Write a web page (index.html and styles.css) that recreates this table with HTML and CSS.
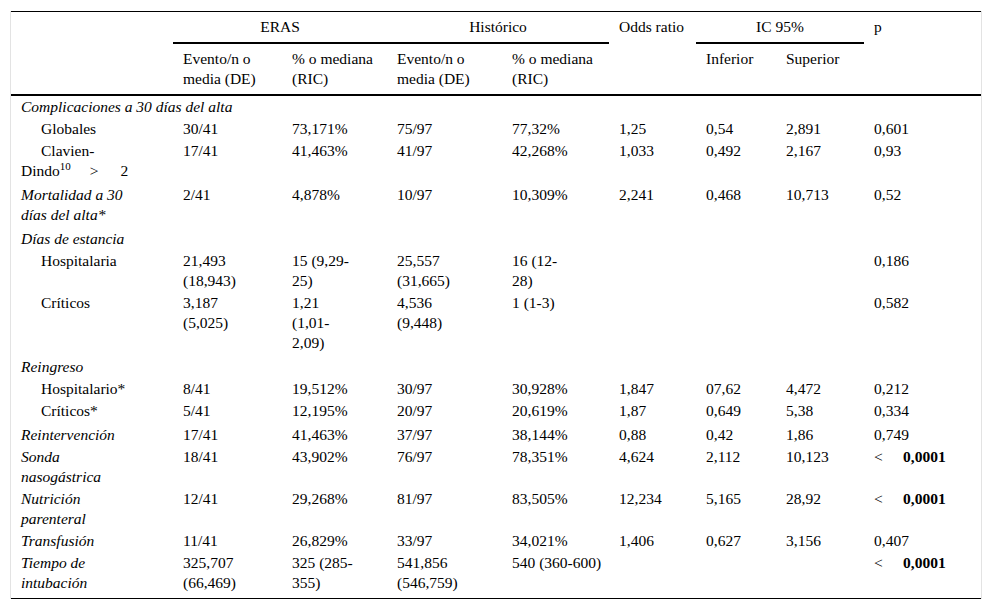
FILE: index.html
```html
<!DOCTYPE html>
<html lang="es">
<head>
<meta charset="utf-8">
<title>Tabla</title>
<link rel="stylesheet" href="styles.css">
</head>
<body>
<div class="frame">
<table class="data">
<colgroup>
<col class="c0"><col class="c1"><col class="c2"><col class="c3"><col class="c4"><col class="c5"><col class="c6"><col class="c7"><col class="c8">
</colgroup>
<thead>
<tr class="h1">
<th rowspan="2"></th>
<th colspan="2" class="span center">ERAS</th>
<th colspan="2" class="span center">Histórico</th>
<th rowspan="2">Odds ratio</th>
<th colspan="2" class="span center">IC 95%</th>
<th rowspan="2">p</th>
</tr>
<tr class="h2">
<th>Evento/n o<br>media (DE)</th>
<th>% o mediana<br>(RIC)</th>
<th>Evento/n o<br>media (DE)</th>
<th>% o mediana<br>(RIC)</th>
<th>Inferior</th>
<th>Superior</th>
</tr>
</thead>
<tbody>
<tr><td colspan="9" class="cat">Complicaciones a 30 días del alta</td></tr>
<tr><td class="sub">Globales</td><td>30/41</td><td>73,171%</td><td>75/97</td><td>77,32%</td><td>1,25</td><td>0,54</td><td>2,891</td><td>0,601</td></tr>
<tr class="more"><td class="sub">Clavien-<br>Dindo<sup>10</sup><span class="gap1">&gt;</span><span class="gap2">2</span></td><td>17/41</td><td>41,463%</td><td>41/97</td><td>42,268%</td><td>1,033</td><td>0,492</td><td>2,167</td><td>0,93</td></tr>
<tr class="more"><td class="cat">Mortalidad a 30<br>días del alta*</td><td>2/41</td><td>4,878%</td><td>10/97</td><td>10,309%</td><td>2,241</td><td>0,468</td><td>10,713</td><td>0,52</td></tr>
<tr><td colspan="9" class="cat">Días de estancia</td></tr>
<tr><td class="sub">Hospitalaria</td><td>21,493<br>(18,943)</td><td>15 (9,29-<br>25)</td><td>25,557<br>(31,665)</td><td>16 (12-<br>28)</td><td></td><td></td><td></td><td>0,186</td></tr>
<tr class="more"><td class="sub">Críticos</td><td>3,187<br>(5,025)</td><td>1,21<br>(1,01-<br>2,09)</td><td>4,536<br>(9,448)</td><td>1 (1-3)</td><td></td><td></td><td></td><td>0,582</td></tr>
<tr><td colspan="9" class="cat">Reingreso</td></tr>
<tr><td class="sub">Hospitalario*</td><td>8/41</td><td>19,512%</td><td>30/97</td><td>30,928%</td><td>1,847</td><td>07,62</td><td>4,472</td><td>0,212</td></tr>
<tr class="more"><td class="sub">Críticos*</td><td>5/41</td><td>12,195%</td><td>20/97</td><td>20,619%</td><td>1,87</td><td>0,649</td><td>5,38</td><td>0,334</td></tr>
<tr><td class="cat">Reintervención</td><td>17/41</td><td>41,463%</td><td>37/97</td><td>38,144%</td><td>0,88</td><td>0,42</td><td>1,86</td><td>0,749</td></tr>
<tr><td class="cat">Sonda<br>nasogástrica</td><td>18/41</td><td>43,902%</td><td>76/97</td><td>78,351%</td><td>4,624</td><td>2,112</td><td>10,123</td><td><span class="lt">&lt;</span><b>0,0001</b></td></tr>
<tr><td class="cat">Nutrición<br>parenteral</td><td>12/41</td><td>29,268%</td><td>81/97</td><td>83,505%</td><td>12,234</td><td>5,165</td><td>28,92</td><td><span class="lt">&lt;</span><b>0,0001</b></td></tr>
<tr><td class="cat">Transfusión</td><td>11/41</td><td>26,829%</td><td>33/97</td><td>34,021%</td><td>1,406</td><td>0,627</td><td>3,156</td><td>0,407</td></tr>
<tr class="last"><td class="cat">Tiempo de<br>intubación</td><td>325,707<br>(66,469)</td><td>325 (285-<br>355)</td><td>541,856<br>(546,759)</td><td>540 (360-600)</td><td></td><td></td><td></td><td><span class="lt">&lt;</span><b>0,0001</b></td></tr>
</tbody>
</table>
</div>
</body>
</html>
```

FILE: styles.css
```css
html, body {
  margin: 0;
  padding: 0;
  background: #fff;
}

body {
  font-family: "Liberation Serif", "Times New Roman", serif;
  font-size: 15.5px;
  line-height: 20px;
  color: #000;
}

.frame {
  margin: 11px 10px 0 10px;
  border-left: 1px solid #e3e3e3;
  border-right: 1px solid #e3e3e3;
}

.data {
  width: 100%;
  table-layout: fixed;
  border-collapse: collapse;
  border-top: 1px solid #000;
  border-bottom: 1px solid #000;
  font-family: "Liberation Serif", "Times New Roman", serif;
  font-size: 15.5px;
}

.c0 { width: 162px; }
.c1 { width: 109px; }
.c2 { width: 105px; }
.c3 { width: 115px; }
.c4 { width: 107px; }
.c5 { width: 87px; }
.c6 { width: 80px; }
.c7 { width: 88px; }
.c8 { width: 117px; }

.data th,
.data td {
  padding: 1px 10px;
  text-align: left;
  vertical-align: top;
  white-space: nowrap;
  font-weight: normal;
  font-family: "Liberation Serif", "Times New Roman", serif;
}

.data thead th {
  padding-top: 5px;
  padding-bottom: 5px;
}

.data thead .h2 th,
.data thead th.span,
.data thead th[rowspan] {
  border-bottom: 2px solid #000;
}

.data th.center {
  text-align: center;
}

.data tr.more td {
  padding-bottom: 3px;
}

.data tr.last td {
  padding-bottom: 5px;
}

.cat {
  font-style: italic;
}

.sub {
  text-indent: 20px;
}

.data sup {
  font-size: 11px;
  line-height: 0;
  vertical-align: 6px;
}

.gap1 {
  margin-left: 19px;
}

.gap2 {
  margin-left: 22px;
}

.lt {
  display: inline-block;
  width: 29px;
}

.data b {
  font-weight: bold;
}
```
